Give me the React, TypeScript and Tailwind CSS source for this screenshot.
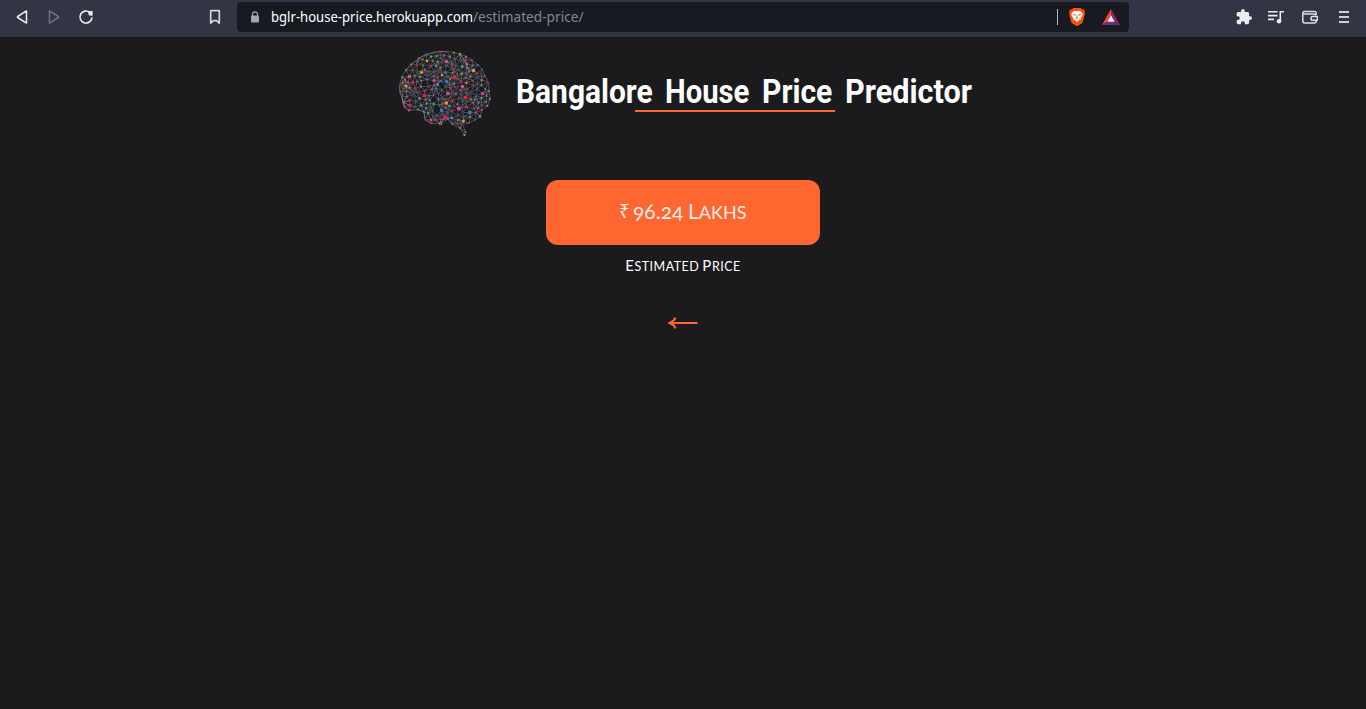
import React from "react";

const OUTLINE: [number, number][] = [
  [10, 50], [9.5, 43], [12, 35], [16, 28], [21, 22.5], [29, 16], [36, 12.5], [43, 10.5], [50, 9.5], [57, 9.5], [64, 10.5],
  [70, 12], [76, 14.5], [82, 18], [88, 23], [92, 27], [95, 34], [98.5, 40], [99, 49], [100, 57], [97.5, 64], [92, 68],
  [90, 74.5], [85, 78], [79, 81], [72.5, 82], [75.5, 90], [74.5, 93], [70, 86], [62, 82], [58, 77], [50.5, 81.5],
  [41, 81.5], [35, 77.5], [34, 70], [28, 67.5], [19, 68.5], [14.5, 65], [13, 60],
];

const MAJOR: [number, number, number, string][] = [
  [56.5, 19.5, 1.7, "#f0429a"], [64.5, 35, 2.1, "#f2184e"], [83.5, 28.5, 1.8, "#f7941d"], [77, 22, 1.3, "#f0429a"],
  [19.5, 34.5, 1.8, "#f0429a"], [23, 40.5, 1.5, "#f2184e"], [16, 44, 1.6, "#f7941d"], [44, 38.5, 1.6, "#f0429a"],
  [72.5, 44.5, 1.7, "#f0429a"], [34.5, 53.5, 1.8, "#f2184e"], [58, 51.5, 1.7, "#f0429a"], [75.5, 55.5, 2, "#f2184e"],
  [92.5, 51.5, 1.6, "#f0429a"], [20, 63.5, 1.8, "#f2184e"], [56.5, 61, 1.7, "#f7941d"], [51.5, 68.5, 1.7, "#4472c4"],
  [69, 66.5, 1.9, "#f0429a"], [80, 70.5, 1.9, "#4472c4"], [55, 75, 2, "#f2184e"], [50.5, 81.5, 1.6, "#f7941d"],
  [56.5, 39.5, 1.7, "#4472c4"], [31.5, 30.5, 1.4, "#f7941d"], [41, 78, 1.3, "#f0429a"], [36, 66, 1.3, "#4472c4"],
  [73.5, 79, 1.4, "#f7941d"], [90, 74.5, 1.3, "#f7941d"], [88, 66, 1.2, "#f0429a"], [13.5, 60.5, 1.3, "#f0429a"],
  [37, 19, 1.3, "#f7941d"], [70, 12, 1.3, "#f7941d"], [74.5, 93, 0.9, "#f7941d"], [52, 33, 1.2, "#f7941d"],
];

const HUES = ["#d51f45", "#3fae9a", "#4472c4", "#49307f", "#c9742a", "#27646c", "#8e8e35", "#b93a83", "#2c5b60", "#41306b", "#53565d"];

function inside(x: number, y: number) {
  let hit = false;
  for (let i = 0, j = OUTLINE.length - 1; i < OUTLINE.length; j = i++) {
    const [xi, yi] = OUTLINE[i];
    const [xj, yj] = OUTLINE[j];
    if (yi > y !== yj > y && x < ((xj - xi) * (y - yi)) / (yj - yi) + xi) hit = !hit;
  }
  return hit;
}

function buildNetwork() {
  let seed = 41;
  const rnd = () => {
    seed = (seed * 16807) % 2147483647;
    return seed / 2147483647;
  };
  const nodes = MAJOR.map(([x, y, r, c]) => ({ x, y, r, c }));
  OUTLINE.forEach(([x, y], i) => nodes.push({ x, y, r: 0.95, c: HUES[(i * 3) % 8] }));
  for (let k = 0; k < 5000; k++) {
    const x = 9 + rnd() * 92;
    const y = 9 + rnd() * 82;
    if (!inside(x, y)) continue;
    if (nodes.some((n) => Math.hypot(n.x - x, n.y - y) < 3.9)) continue;
    nodes.push({ x, y, r: 0.75 + rnd() * 0.45, c: HUES[Math.floor(rnd() * HUES.length)] });
  }
  const edges: [number, number, number, number][] = [];
  for (let i = 0; i < nodes.length; i++)
    for (let j = i + 1; j < nodes.length; j++) {
      const a = nodes[i];
      const b = nodes[j];
      if (Math.hypot(a.x - b.x, a.y - b.y) < 8 && inside((a.x + b.x) / 2, (a.y + b.y) / 2)) edges.push([a.x, a.y, b.x, b.y]);
    }
  return { nodes, edges };
}

const NET = buildNetwork();

function Brain() {
  return (
    <svg className="h-[100px] w-[110px] shrink-0" viewBox="0 0 110 100">
      <g stroke="#b4b8c4" strokeOpacity="0.6" strokeWidth="0.55">
        <polygon points={OUTLINE.map((p) => p.join(",")).join(" ")} fill="none" />
        {NET.edges.map(([a, b, c, d], i) => (
          <line key={i} x1={a} y1={b} x2={c} y2={d} />
        ))}
      </g>
      {NET.nodes.map((n, i) => (
        <circle key={i} cx={n.x} cy={n.y} r={n.r} fill={n.c} />
      ))}
    </svg>
  );
}

function BraveLion() {
  return (
    <svg className="h-[18px] w-4" viewBox="0 0 16 18">
      <path d="M4.3 0h7.4l1.4 1.5 1.4-.2L16 3.400l-.4 1.400.3 1.200-2 7.400c-.3 1.100-.8 1.700-1.700 2.300L9 17.700c-.7.4-1.300.4-2 0l-3.200-2c-.9-.6-1.400-1.200-1.700-2.300L.1 6l.3-1.200L0 3.400l1.500-2.100 1.400.2z" fill="#fb4f05" />
      <path d="M5 2.700l3 .5 3-.5 2.700 3-.3 1.700-1.600 2.700.2 1.200-1.400.8-1.200.3L8 14.200l-1.400-1.800-1.200-.3-1.400-.8.2-1.200-1.600-2.700-.3-1.700z" fill="#fff" />
      <path d="M4 5.900l2.800.7-.2 1.100-2-.5zM12 5.900l-2.800.7.2 1.100 2-.5zM7.600 7.500h.8v1.800l1 .6L8 10.700l-1.400-.8 1-.6zM5.100 9.900l1.600 1.500-1 .2zM10.900 9.900l-1.600 1.500 1 .2z" fill="#fb4f05" />
    </svg>
  );
}

function BatTriangle() {
  return (
    <svg className="h-4 w-[18px]" viewBox="0 0 18 16">
      <path d="M9 0L0 16l5.400-3.200L9 6.300z" fill="#ff4724" />
      <path d="M9 0l9 16-5.400-3.200L9 6.300z" fill="#9e1f63" />
      <path d="M0 16h18l-5.400-3.200H5.400z" fill="#662d91" />
      <path d="M9 6.300l3.600 6.500H5.400z" fill="#fff" />
    </svg>
  );
}

function BrowserBar() {
  return (
    <header className="flex h-[37px] shrink-0 items-start bg-[#323544] text-[#ececee]">
      <div className="flex h-[34px] w-[237px] items-center">
        <svg className="ml-4 h-4 w-3" viewBox="0 0 12 16" fill="none" stroke="currentColor" strokeWidth="1.5" strokeLinejoin="round">
          <path d="M10.500 2.200v11.600q0 .4-.5.100L1.700 8.500q-.7-.5 0-1L10 2.100q.5-.3.500.1z" />
        </svg>
        <svg className="ml-5 h-4 w-3 text-[#6f717d]" viewBox="0 0 12 16" fill="none" stroke="currentColor" strokeWidth="1.500" strokeLinejoin="round">
          <path d="M1.500 2.200v11.600q0 .4.500.1l8.300-5.400q.7-.5 0-1L2 2.100q-.5-.3-.5.1z" />
        </svg>
        <svg className="ml-[18px] h-4 w-4" viewBox="0 0 16 16">
          <path d="M11.900 3.500A6 6 0 1 0 13.900 9" fill="none" stroke="currentColor" strokeWidth="1.600" strokeLinecap="round" />
          <path d="M10.600 2.300l3.600-.2q.6 0 .5.600l-.1 3.500q-.1.600-.7.500l-2.500-.2q-.5-.1-.6-.6L10 3z" fill="currentColor" />
        </svg>
        <svg className="ml-[115px] h-4 w-3" viewBox="0 0 12 16" fill="none" stroke="#d6d6da" strokeWidth="1.700" strokeLinejoin="round">
          <path d="M1.700 1.700h8.600v12.400l-2.700-2.500H4.400l-2.700 2.500z" />
        </svg>
      </div>
      <div className="mt-0.5 flex h-[30px] w-[892px] items-center rounded bg-[#171a21]">
        <svg className="ml-[14px] h-3 w-2" viewBox="0 0 8 12">
          <path d="M1.500 5V3.300a2.500 2.500 0 0 1 5 0V5" fill="none" stroke="#a5a6ad" strokeWidth="1.200" />
          <rect y="4.500" width="8" height="7" rx="1" fill="#a5a6ad" />
        </svg>
        <p className="ml-3 flex w-[770px] whitespace-nowrap font-['Noto_Sans','Open_Sans',sans-serif] text-[14px] leading-[30px]">
          <span className="block w-[202px]"><span className="inline-block origin-left scale-x-[0.935] text-white">bglr-house-price.herokuapp.com</span></span>
          <span className="inline-block origin-left scale-x-[0.975] text-[#85868b]">/estimated-price/</span>
        </p>
        <div className="ml-4 h-4 w-px bg-[#b5b6ba]" />
        <div className="ml-[11px] flex items-center gap-[17px]">
          <BraveLion />
          <BatTriangle />
        </div>
      </div>
      <div className="flex h-[34px] items-center pl-[107px]">
        <svg className="h-4 w-4" viewBox="1 1 22 22" fill="currentColor">
          <path d="M20.500 11H19V7c0-1.100-.9-2-2-2h-4V3.500a2.500 2.500 0 0 0-5 0V5H4c-1.100 0-1.990.9-1.990 2v3.800H3.500a2.700 2.700 0 0 1 0 5.400H2V20c0 1.100.9 2 2 2h3.800v-1.500a2.700 2.700 0 0 1 5.400 0V22H17c1.100 0 2-.9 2-2v-4h1.500a2.500 2.500 0 0 0 0-5z" />
        </svg>
        <svg className="ml-4 h-[14px] w-4" viewBox="0 0 16 14" fill="none" stroke="currentColor" strokeWidth="1.600">
          <path d="M0 1.800h9.500M0 5.600h9.500M0 9.400h6M16 1.800h-3.700V11" />
          <circle cx="11" cy="11.200" r="2.300" fill="currentColor" stroke="none" />
        </svg>
        <svg className="ml-[18px] h-[14px] w-4" viewBox="0 0 16 14" fill="none" stroke="#dedee2" strokeWidth="1.500">
          <path d="M14.200 5V3.600a2 2 0 0 0-2-2H2.300a1.500 1.500 0 0 0-1.500 1.500v8a2 2 0 0 0 2 2h9.400a2 2 0 0 0 2-2V11M1 4h10.500a2 2 0 0 1 2 1.400" />
          <path d="M15.300 6.500h-4.500a1.900 1.900 0 0 0 0 3.800h4.500z" />
        </svg>
        <svg className="ml-[21px] h-3 w-2.5" viewBox="0 0 10 12" stroke="#cfcfd4" strokeWidth="1.900">
          <path d="M0 1h10M0 6h10M0 11h10" />
        </svg>
      </div>
    </header>
  );
}

export default function App() {
  return (
    <div className="flex h-[709px] w-[1366px] flex-col overflow-hidden bg-[#1b1b1d]">
      <BrowserBar />
      <main className="flex flex-col items-center border-t border-[#171616]">
        <div className="flex w-full items-start pl-[390px] pt-1">
          <Brain />
          <div className="ml-4 mt-6 w-[460px]">
            <h1 className="flex h-11 whitespace-nowrap font-[Roboto,sans-serif] text-[34px] font-bold leading-[50px] text-white">
              <span className="w-[149px]"><span className="inline-block origin-left scale-x-[0.88]">Bangalore</span></span>
              <span className="w-[97px]"><span className="inline-block origin-left scale-x-[0.86]">House</span></span>
              <span className="w-[83px]"><span className="inline-block origin-left scale-x-[0.885]">Price</span></span>
              <span className="w-[127px]"><span className="inline-block origin-left scale-x-[0.9]">Predictor</span></span>
            </h1>
            <div className="ml-[119px] h-0.5 w-[200px] bg-[#ff6630]" />
          </div>
        </div>
        <div className="mt-[38px] flex h-[65px] w-[274px] items-center rounded-xl bg-[#ff6630] pb-[3px] pl-[73px] font-[Lato,sans-serif] text-[21px] text-[#f3eeee]">
          <span className="w-[14px] font-['Noto_Sans',sans-serif] text-[19px]">₹</span>
          <span className="w-[55px] oldstyle-nums">96.24</span>
          <span className="inline-block text-[18px] uppercase first-letter:text-[21px]">Lakhs</span>
        </div>
        <p className="mt-2 flex gap-[3px] font-[Lato,sans-serif] text-[12.5px] leading-6 tracking-[0.5px] text-white">
          <span className="inline-block uppercase first-letter:text-[15px]">Estimated</span>
          <span className="inline-block uppercase first-letter:text-[15px]">Price</span>
        </p>
        <svg className="mt-[38px] h-3 w-[30px]" viewBox="0 0 30 12" fill="none" stroke="#ff6630">
          <path d="M1.500 6H29.500" strokeWidth="2" />
          <path d="M7.500.7Q6 4.500 1.500 6 6 7.500 7.500 11.300" strokeWidth="2" />
        </svg>
      </main>
    </div>
  );
}
